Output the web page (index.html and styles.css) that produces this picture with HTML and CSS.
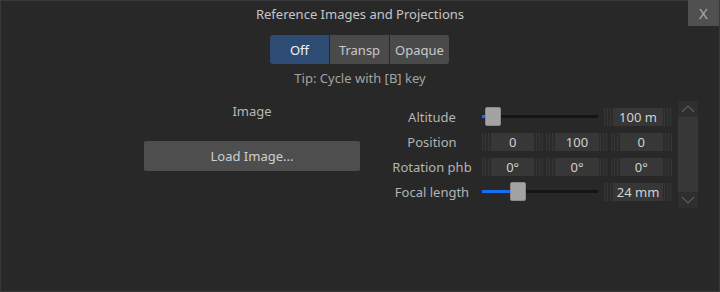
FILE: index.html
```html
<!DOCTYPE html>
<html lang="en">
<head>
    <meta charset="UTF-8">
    <title>Reference Images and Projections</title>
    <link rel="stylesheet" href="styles.css">
</head>
<body>
    <div class="window">
        <div class="header">
            <span></span>
            <div class="title">Reference Images and Projections</div>
            <button class="close-btn">X</button>
        </div>

        <div class="mode-row">
            <button class="seg active">Off</button>
            <button class="seg">Transp</button>
            <button class="seg">Opaque</button>
        </div>
        <div class="tip">Tip: Cycle with [B] key</div>

        <div class="panel">
            <div class="image-col">
                <div class="image-label">Image</div>
                <button class="load-btn">Load Image...</button>
            </div>

            <div class="props">
                <div class="prop-label">Altitude</div>
                <div class="ctrl-slider">
                    <div class="slider">
                        <div class="fill" style="width: 3px"></div>
                        <div class="thumb"></div>
                        <div class="rest"></div>
                    </div>
                    <div class="num"><span>100 m</span></div>
                </div>

                <div class="prop-label">Position</div>
                <div class="ctrl-triple">
                    <div class="num"><span>0</span></div>
                    <div class="num"><span>100</span></div>
                    <div class="num"><span>0</span></div>
                </div>

                <div class="prop-label">Rotation phb</div>
                <div class="ctrl-triple">
                    <div class="num"><span>0°</span></div>
                    <div class="num"><span>0°</span></div>
                    <div class="num"><span>0°</span></div>
                </div>

                <div class="prop-label">Focal length</div>
                <div class="ctrl-slider">
                    <div class="slider">
                        <div class="fill" style="width: 28px"></div>
                        <div class="thumb"></div>
                        <div class="rest"></div>
                    </div>
                    <div class="num"><span>24 mm</span></div>
                </div>
            </div>

            <div class="scrollbar">
                <div class="arrow">
                    <svg width="14" height="8" viewBox="0 0 14 8"><path d="M1 7 L7 1 L13 7" fill="none" stroke="#5c5c5c" stroke-width="1.2"/></svg>
                </div>
                <div class="sb-thumb"></div>
                <div class="arrow">
                    <svg width="14" height="8" viewBox="0 0 14 8"><path d="M1 1 L7 7 L13 1" fill="none" stroke="#5c5c5c" stroke-width="1.2"/></svg>
                </div>
            </div>
        </div>
    </div>
</body>
</html>
```

FILE: styles.css
```css
/* base */
* { box-sizing: border-box; }
body { margin: 0; background: #282828; font-family: "Noto Sans", "Open Sans", sans-serif; font-size: 13px; color: #c4c4c4; }
button { font-family: inherit; font-size: 13px; border: none; padding: 0; cursor: pointer; }

.window { width: 720px; height: 292px; border: 1px solid #393939; background: #282828; }

/* header */
.header { display: grid; grid-template-columns: 31px 1fr 31px; height: 25px; margin-top: -1px; }
.title { text-align: center; line-height: 28px; color: #c6c6c6; }
.close-btn { background: #505050; color: #a9a9a9; font-size: 15px; height: 26px; line-height: 26px; }

/* mode buttons */
.mode-row { display: flex; justify-content: center; gap: 1px; margin-top: 10px; padding-right: 1px; }
.seg { height: 29px; width: 59px; background: #4a4a4a; color: #c8c8c8; border-radius: 0; }
.seg:first-child { border-radius: 3px 0 0 3px; }
.seg:last-child { border-radius: 0 3px 3px 0; }
.seg.active { background: #2e4b74; color: #eef2f8; }
.tip { text-align: center; line-height: 18px; margin-top: 5px; color: #a3a3a3; }

/* body */
.panel { display: flex; margin-top: 14px; }
.image-col { width: 216px; margin-left: 143px; display: flex; flex-direction: column; align-items: stretch; }
.image-label { text-align: center; line-height: 20px; color: #b8b8b8; }
.load-btn { margin-top: 20px; height: 30px; background: #4e4e4e; color: #cfcfcf; border-radius: 2px; }

.props { display: grid; grid-template-columns: 84px 190px; grid-auto-rows: 25px; column-gap: 8px; margin-left: 30px; margin-top: 3px; align-items: center; }
.prop-label { text-align: center; color: #b4b4b4; white-space: nowrap; }

.ctrl-slider { display: flex; align-items: center; gap: 6px; }
.ctrl-triple { display: grid; grid-template-columns: repeat(3, 1fr); gap: 3px; }

.slider { width: 116px; height: 19px; display: flex; align-items: center; }
.fill { height: 3px; background: #1c6cf2; flex-shrink: 0; }
.thumb { width: 16px; height: 19px; background: #a3a3a3; border: 1px solid #8a8a8a; border-radius: 2px; flex-shrink: 0; }
.rest { flex-grow: 1; height: 3px; background: #151515; }

.num { flex: 1; height: 18px; display: flex; padding: 0 9px; background: repeating-linear-gradient(90deg, #363636 0 1px, #2b2b2b 1px 3px); }
.num span { flex: 1; background: #373737; text-align: center; line-height: 18px; color: #d2d2d2; }
.ctrl-slider .num { flex: 0 0 68px; }

/* scrollbar */
.scrollbar { width: 20px; height: 107px; margin-left: 6px; background: #2e2e2e; display: flex; flex-direction: column; }
.arrow { height: 16px; display: flex; align-items: center; justify-content: center; }
.sb-thumb { flex-grow: 1; background: #373737; }
```
